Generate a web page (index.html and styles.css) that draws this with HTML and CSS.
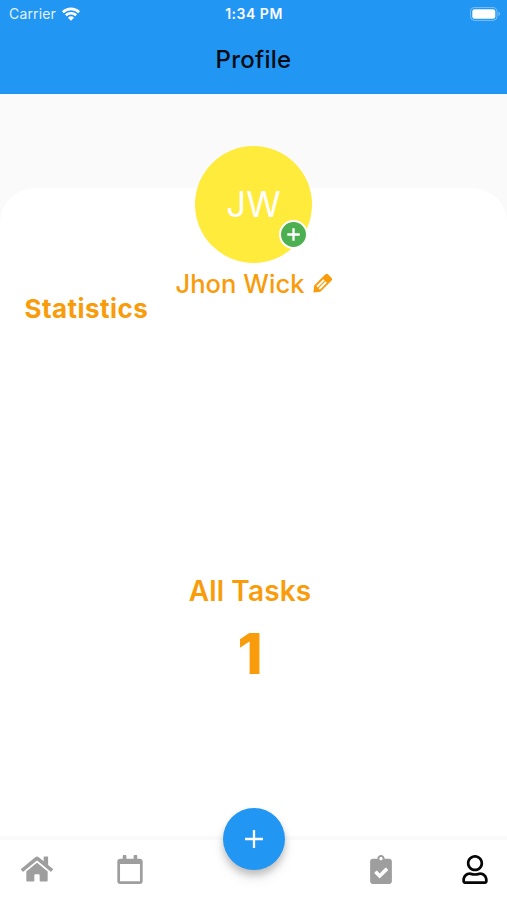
FILE: index.html
```html
<!DOCTYPE html>
<html lang="en">
<head>
<meta charset="utf-8">
<title>Profile</title>
<link rel="stylesheet" href="styles.css">
</head>
<body>
<div class="app">
  <header class="header">
    <div class="status">
      <div class="carrier"><span>Carrier</span>
        <svg class="wifi" viewBox="0 0 18 14"><g fill="none" stroke="#fff" stroke-width="2.6"><path d="M.9 5.2a11.6 11.6 0 0 1 16.2 0"/><path d="M3.8 8.3a7.5 7.5 0 0 1 10.4 0"/></g><path fill="#fff" d="M5.9 10.7a4.5 4.5 0 0 1 6.2 0L9 13.7z"/></svg>
      </div>
      <div class="time">1:34 PM</div>
      <svg class="battery" viewBox="0 0 31 14"><rect x=".6" y=".6" width="26.4" height="12.8" rx="4" fill="none" stroke="#fff" stroke-opacity=".4"/><rect x="2.3" y="2.3" width="23" height="9.4" rx="2.3" fill="#fff"/><path d="M28.5 4.8q3 2.2 0 4.4z" fill="#fff" fill-opacity=".45"/></svg>
    </div>
    <h1 class="title">Profile</h1>
  </header>
  <main class="content">
    <section class="sheet">
      <div class="avatar"><span class="initials">JW</span>
        <div class="badge"><svg viewBox="0 0 14 14"><path d="M7 .3v13.400M.3 7h13.400" stroke="#fff" stroke-width="2.500"/></svg></div>
      </div>
      <div class="name"><span class="name-text">Jhon Wick</span>
        <svg class="pencil" viewBox="0 0 20 20"><g transform="translate(.4 19.6) rotate(-45)"><path fill="#f99c0b" fill-rule="evenodd" d="M0 0l5.500-4.400H21.400q1.800 0 1.800 1.800V2.600q0 1.800-1.800 1.800H5.500zM6.700-2.500V-.6H16.500V-2.500zM6.700.6V2.500H16.500V.6z"/></g></svg>
      </div>
      <h2 class="statistics">Statistics</h2>
      <div class="tasks"><div class="tasks-label">All Tasks</div><div class="tasks-count">1</div></div>
    </section>
  </main>
  <nav class="nav">
    <svg class="home" viewBox="0 32 576 448"><path d="M280.37 148.26L96 300.11V464a16 16 0 0 0 16 16l112.06-.29a16 16 0 0 0 15.92-16V368a16 16 0 0 1 16-16h64a16 16 0 0 1 16 16v95.64a16 16 0 0 0 16 16.05L464 480a16 16 0 0 0 16-16V300L295.67 148.26a12.19 12.19 0 0 0-15.3 0zM571.6 251.47L488 182.56V44.05a12 12 0 0 0-12-12h-56a12 12 0 0 0-12 12v72.61L318.47 43a48 48 0 0 0-61 0L4.34 251.47a12 12 0 0 0-1.6 16.9l25.5 31A12 12 0 0 0 45.15 301l235.22-193.74a12.19 12.19 0 0 1 15.3 0L530.9 301a12 12 0 0 0 16.9-1.6l25.5-31a12 12 0 0 0-1.7-16.93z"/></svg>
    <svg class="calendar" viewBox="0 0 448 512"><path fill-rule="evenodd" d="M400 64h-48V12c0-6.600-5.400-12-12-12h-40c-6.600 0-12 5.400-12 12v52H160V12c0-6.600-5.400-12-12-12h-40c-6.600 0-12 5.400-12 12v52H48C21.500 64 0 85.500 0 112v352c0 26.500 21.500 48 48 48h352c26.500 0 48-21.500 48-48V112c0-26.500-21.500-48-48-48zm-6 400H54c-3.300 0-6-2.700-6-6V160h352v298c0 3.300-2.700 6-6 6z"/></svg>
    <button class="add" aria-label="Add task"><svg viewBox="0 0 18 18"><path d="M9 0v18M0 9h18" stroke="#fff" stroke-width="2.300"/></svg></button>
    <svg class="clipboard" viewBox="0 0 384 512"><path fill-rule="evenodd" d="M336 64h-80c0-35.300-28.700-64-64-64s-64 28.700-64 64H48C21.500 64 0 85.500 0 112v352c0 26.500 21.500 48 48 48h288c26.500 0 48-21.500 48-48V112c0-26.500-21.500-48-48-48zM192 36c16 0 28 12 28 28s-12 28-28 28-28-12-28-28 12-28 28-28zM313 272L177 407c-5 5-12 5-17 0l-81-82c-5-5-5-12 0-17l28-28c5-5 12-5 17 0l45 46 99-99c5-5 12-5 17 0l28 28c5 5 5 12 0 17z"/></svg>
    <svg class="user" viewBox="0 0 448 512"><path d="M313.600 304c-28.700 0-42.500 16-89.600 16-47.100 0-60.800-16-89.600-16C60.200 304 0 364.200 0 438.400V464c0 26.500 21.500 48 48 48h352c26.500 0 48-21.500 48-48v-25.600c0-74.200-60.200-134.400-134.400-134.400zM400 464H48v-25.600c0-47.600 38.800-86.400 86.400-86.400 14.600 0 38.300 16 89.600 16 51.700 0 74.900-16 89.600-16 47.600 0 86.400 38.800 86.400 86.400V464zM224 288c79.500 0 144-64.500 144-144S303.500 0 224 0 80 64.500 80 144s64.500 144 144 144zm0-240c52.900 0 96 43.100 96 96s-43.100 96-96 96-96-43.100-96-96 43.100-96 96-96z"/></svg>
  </nav>
</div>
</body>
</html>
```
FILE: styles.css
```css
* { box-sizing: border-box; }
body { margin: 0; font-family: Inter, "Liberation Sans", sans-serif; background: #fff; }
svg { display: block; flex: none; }
.app { width: 507px; height: 900px; display: flex; flex-direction: column; overflow: hidden; }
.header { height: 94px; background: #2196f3; flex: none; }
.status { height: 27px; padding: 0 6px 0 9px; display: grid; grid-template-columns: 1fr auto 1fr; align-items: center; color: #fff; font-size: 14px; line-height: 27px; }
.carrier { display: flex; align-items: center; gap: 6px; color: #e3f2fe; letter-spacing: .15px; }
.wifi { width: 18px; height: 14px; }
.time { font-weight: 600; letter-spacing: .5px; margin-right: 2px; }
.battery { width: 31px; height: 14px; justify-self: end; }
.title { margin: 15px 0 0; font-size: 24px; line-height: 36px; font-weight: 500; letter-spacing: .25px; text-align: center; color: #050b12; }
.content { flex: 1; background: #fafafa; padding-top: 94px; }
.sheet { height: 100%; background: #fff; border-radius: 35px 35px 0 0; display: flex; flex-direction: column; }
.avatar { position: relative; width: 117px; height: 117px; margin: -42.500px auto 0; border-radius: 50%; background: #ffeb3b; display: flex; align-items: center; justify-content: center; flex: none; }
.initials { color: #fff; font-size: 35px; line-height: 40px; font-weight: 400; }
.badge { position: absolute; right: 4px; bottom: 13.500px; width: 29px; height: 29px; border: 2px solid #fff; border-radius: 50%; background: #4caf50; display: flex; align-items: center; justify-content: center; }
.badge svg { width: 13px; height: 13px; }
.name { display: flex; align-items: center; gap: 9px; margin: 5.500px 0 0 175.500px; height: 31px; color: #f99c0b; font-size: 25.500px; line-height: 31px; letter-spacing: .05px; font-weight: 450; }
.pencil { width: 20px; height: 20px; margin-top: -1px; }
.statistics { margin: -6px 0 0 24.500px; color: #f99c0b; font-size: 26px; line-height: 32px; font-weight: 700; letter-spacing: .45px; }
.tasks { margin: 248px 7px 0 0; text-align: center; color: #f99c0b; }
.tasks-label { font-size: 28px; line-height: 36px; font-weight: 600; letter-spacing: .15px; }
.tasks-count { margin-top: 9px; font-size: 57px; line-height: 72px; font-weight: 800; }
.nav { height: 64px; flex: none; position: relative; border-top: 4px solid #fafafa; background: #fff; display: flex; align-items: flex-start; padding: 15px 19px 0 21px; fill: #9e9e9e; }
.home { width: 32px; height: 26px; margin-top: 1px; }
.calendar { width: 26px; height: 29px; margin-left: 64px; }
.clipboard { width: 22px; height: 29px; margin-left: auto; }
.user { width: 26px; height: 29px; margin-left: 70px; fill: #050505; }
.add { position: absolute; left: 223px; top: -32px; width: 62px; height: 62px; padding: 0; border: 0; border-radius: 50%; background: #2196f3; display: flex; align-items: center; justify-content: center; box-shadow: 0 5px 7px rgba(0,0,0,.2), 0 8px 14px rgba(0,0,0,.08); }
.add svg { width: 18px; height: 18px; }
```
